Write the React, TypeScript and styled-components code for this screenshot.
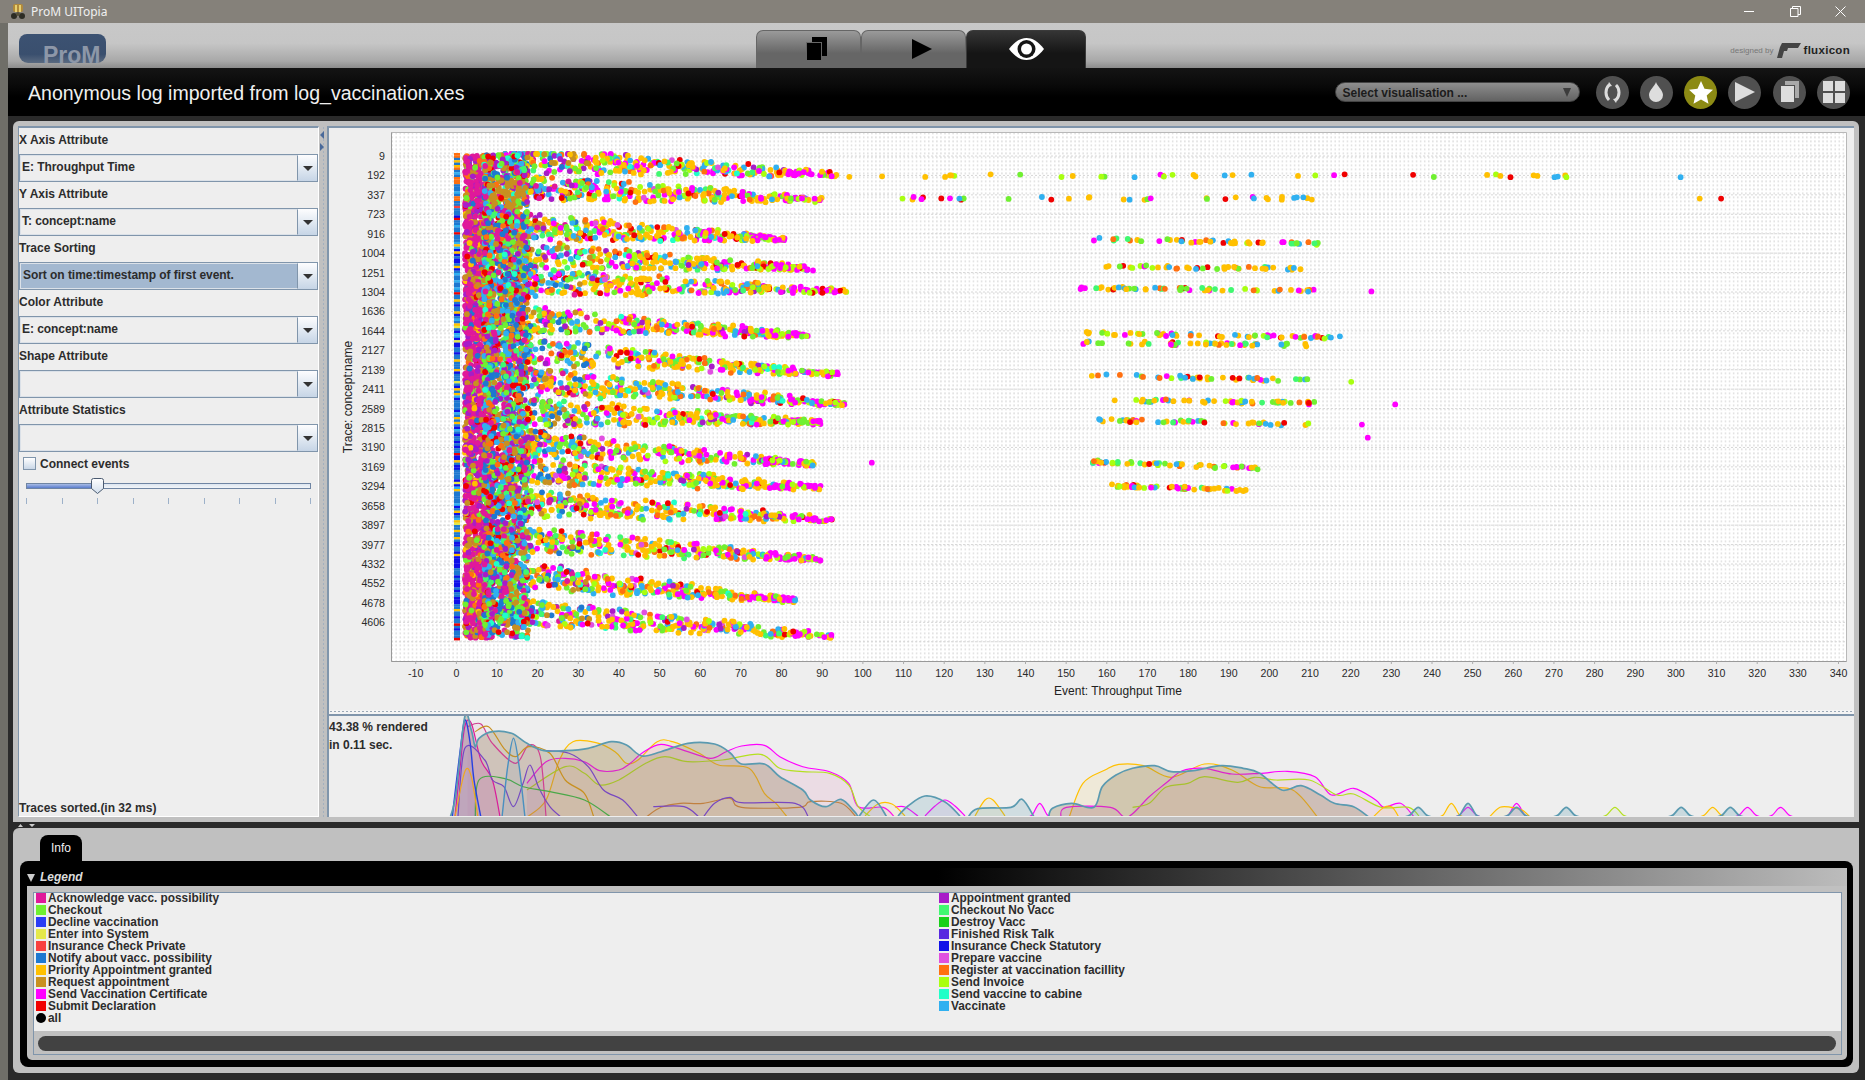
import React from "react";
import styled, { createGlobalStyle } from "styled-components";

const Global = createGlobalStyle`
  html, body { margin: 0; padding: 0; width: 1865px; height: 1080px; overflow: hidden; background: #2a2a2a; }
  #root { width: 1865px; height: 1080px; }
  * { box-sizing: border-box; }
`;

const SANS = `"Liberation Sans", Arial, sans-serif`;

/* ---------- frame ---------- */
const Desktop = styled.div`
  width: 1865px; height: 1080px; display: flex; flex-direction: column;
  font-family: ${SANS}; background: #6f6e68;
`;
const TitleBar = styled.div`
  height: 23px; flex: none; background: #85817a; display: flex; align-items: center;
  padding-left: 10px; color: #f0f0f0; font: 12px "Noto Sans", sans-serif; gap: 5px;
`;
const WindowButtons = styled.div`
  margin-left: auto; display: flex; align-items: center; margin-right: 19px; gap: 34.5px; height: 23px;
`;
const Frame = styled.div`
  flex: 1; margin-left: 8px; background: #2a2a2a; display: flex; flex-direction: column; min-height: 0;
`;
const Header = styled.div`
  height: 45px; flex: none; display: flex; align-items: flex-end; overflow: hidden;
  background: linear-gradient(#c8c8c8 0, #c6c6c6 45%, #a8a8a8 85%, #8c8c8c 100%);
`;
const Logo = styled.div`
  width: 87px; height: 29px; margin: 0 0 5px 11px; border-radius: 8px 8px 9px 9px; flex: none;
  background: linear-gradient(#3c5272, #3a4f6e 70%, #5a6a80); overflow: hidden;
  color: #8d97a8; font: bold 23px ${SANS}; padding: 9px 0 0 24px; line-height: 24px; white-space: nowrap;
`;
const Tabs = styled.div`
  display: flex; margin-left: 650px; align-self: flex-end; height: 38px;
`;
const Tab = styled.div<{ $active?: boolean }>`
  height: 38px; width: ${(p) => (p.$active ? 120 : 105)}px; display: flex; align-items: center; justify-content: center;
  border-radius: 7px 7px 0 0; padding: 0 0 2px ${(p) => (p.$active ? 0 : 16)}px;
  background: ${(p) => (p.$active ? "linear-gradient(#353535,#151515 60%)" : "linear-gradient(#9a9a9a,#666 60%)")};
  border: 1px solid ${(p) => (p.$active ? "#3a3a3a" : "#666")}; border-bottom: none;
`;
const Designed = styled.div`
  margin-left: auto; margin-right: 15px; margin-bottom: 10px; display: flex; align-items: center; gap: 3px;
  color: #777; font: 8px ${SANS};
`;
const Flux = styled.span`
  color: #222; font: bold 11.5px ${SANS}; letter-spacing: .3px;
`;
const Band = styled.div`
  height: 48px; flex: none; display: flex; align-items: center; padding: 0 15px 0 20px;
  background: linear-gradient(#141414, #0a0a0a 35%, #000 60%);
`;
const DocTitle = styled.div`
  color: #f0f0f0; font: 19.55px ${SANS}; padding-top: 2px;
`;
const VisSelect = styled.div`
  margin-left: auto; width: 245px; height: 20px; border-radius: 10px; padding: 1px 8px 0 7px;
  background: linear-gradient(#8e8e8e, #626262); display: flex; align-items: center; justify-content: space-between;
  color: #1c1c1c; font: bold 12px ${SANS}; margin-right: 16px; border: 1px solid #444;
`;
const VisArrow = styled.span`
  width: 0; height: 0; border-left: 4.5px solid transparent; border-right: 4.5px solid transparent;
  border-top: 9px solid #3c3c3c;
`;
const RoundRow = styled.div`
  display: flex; gap: 11.3px;
`;
const Round = styled.div<{ $on?: boolean }>`
  width: 33px; height: 33px; border-radius: 50%; background: ${(p) => (p.$on ? "#8c8a14" : "#505050")};
  display: flex; align-items: center; justify-content: center;
`;

/* ---------- main panel ---------- */
const Main = styled.div`
  height: 701px; flex: none; margin: 5px 6px 0 5px; background: #c0c0c0; border-radius: 6px 6px 0 0;
  padding: 5px 5px 5px 5px; display: flex;
`;
const Side = styled.div`
  width: 301px; flex: none; background: #eee; border-top: 2px solid #8095ab; border-left: 1px solid #8095ab;
  border-right: 1px solid #fff; border-bottom: 1px solid #fff; display: flex; flex-direction: column; color: #2c2c2c;
`;
const FieldLabel = styled.div`
  height: 26.2px; flex: none; padding-bottom: 7px; font: bold 12px ${SANS}; display: flex; align-items: flex-end;
`;
const Combo = styled.div`
  height: 27.8px; flex: none; display: flex; border: 1px solid #8095ab; background: #eee;
`;
const ComboValue = styled.div<{ $selected?: boolean }>`
  flex: 1; border: 1px solid #dbe1e8; border-right: 1px solid #8095ab; padding: 0 0 3px ${(p) => (p.$selected ? 2 : 1)}px;
  background: ${(p) => (p.$selected ? "#a3b8d0" : "#eee")}; font: bold 12px ${SANS}; letter-spacing: -.05px;
  display: flex; align-items: center; white-space: nowrap;
`;
const ComboBtn = styled.div`
  width: 19px; flex: none; background: linear-gradient(#fdfdfe, #c6d5e6);
  display: flex; align-items: center; justify-content: center;
`;
const ComboArrow = styled.span`
  width: 0; height: 0; border-left: 5px solid transparent; border-right: 5px solid transparent;
  border-top: 5px solid #333;
`;
const CheckRow = styled.div`
  display: flex; align-items: center; gap: 4px; margin: 5px 0 0 4px; height: 14px; font: bold 12px ${SANS};
`;
const CheckBox = styled.span`
  width: 13px; height: 13px; border: 1px solid #8095ab; background: linear-gradient(#fff, #c9d7e7);
`;
const SliderBox = styled.div`
  margin: 7px 7px 0 7px; position: relative; height: 16px; display: flex; align-items: center;
`;
const Track = styled.div`
  flex: 1; height: 6px; border: 1px solid #6f85a3; background: linear-gradient(#dce5f0, #f2f5f9);
`;
const TrackFill = styled.div`
  height: 100%; background: linear-gradient(#a8bce6, #5a7ccc);
`;
const Thumb = styled.svg`
  position: absolute; left: 64px; top: 0;
`;
const Ticks = styled.div`
  margin: 4px 7px 0 7px; display: flex; justify-content: space-between;
`;
const TickMark = styled.span`
  width: 1px; height: 6px; background: #9db1c9;
`;
const Status = styled.div`
  margin-top: auto; padding-bottom: 1px; font: bold 12px ${SANS};
`;
const VSplit = styled.div`
  width: 8px; flex: none; position: relative;
  background-image: radial-gradient(#a3b0bf .7px, transparent .9px);
  background-size: 3px 4px; background-position: 3px 0; background-repeat: repeat-y;
`;
const SplitArrows = styled.svg`
  position: absolute; left: 1px; top: 5px;
`;
const Right = styled.div`
  flex: 1; min-width: 0; background: #eee; border-top: 2px solid #8095ab; border-left: 2px solid #8095ab;
  display: flex; flex-direction: column;
`;
const ChartHost = styled.div`
  height: 582px; flex: none;
`;
const ChartSvg = styled.svg`
  display: block; width: 1525px; height: 582px;
`;
const TickText = styled.text`
  font: 10.6px ${SANS}; fill: #2a2a2a;
`;
const AxisTitle = styled.text`
  font: 12px ${SANS}; fill: #222;
`;
const HSplit = styled.div`
  height: 6px; flex: none; background-color: #f4f4f4; border-bottom: 2px solid #8095ab;
  background-image: radial-gradient(#9aa8b6 .7px, transparent .9px);
  background-size: 4px 3px; background-position: 0 0;
`;
const Trend = styled.div`
  height: 100px; flex: none; position: relative; overflow: hidden;
`;
const TrendSvg = styled.svg`
  display: block; width: 1525px; height: 100px;
`;
const Rendered = styled.div`
  position: absolute; left: 0; top: 2px; font: bold 12px/18px ${SANS}; color: #2c2c2c;
`;

/* ---------- splitter + bottom ---------- */
const DarkSplit = styled.div`
  height: 6px; flex: none; padding-left: 10px; display: flex; align-items: center;
`;
const Bottom = styled.div`
  height: 245px; flex: none; margin: 0 6px 0 5px; background: #c0c0c0; border-radius: 6px 0 6px 6px;
  padding: 7px 6px 6px 7px; display: flex; flex-direction: column;
`;
const InfoTab = styled.div`
  width: 42px; height: 26px; margin-left: 20px; flex: none; background: #000; color: #f0f0f0;
  border-radius: 8px 8px 0 0; font: 12px ${SANS}; display: flex; align-items: center; justify-content: center;
`;
const LegendBox = styled.div`
  flex: 1; background: #000; border-radius: 8px; padding: 7px 6px 7px 7px; display: flex; flex-direction: column; min-height: 0;
`;
const LegendHead = styled.div`
  height: 18px; flex: none; display: flex; align-items: center; gap: 5px; color: #ddd;
  font: italic bold 12px ${SANS};
  background: linear-gradient(90deg, #000 50%, #bcbcbc 100%);
`;
const HeadArrow = styled.span`
  width: 0; height: 0; border-left: 4px solid transparent; border-right: 4px solid transparent;
  border-top: 8px solid #ccc; margin-top: 1px;
`;
const LegendBody = styled.div`
  flex: 1; min-height: 0; background: #c0c0c0; border-radius: 0 0 5px 5px; padding: 6px 5px 5px 6px; display: flex;
`;
const LegendInner = styled.div`
  flex: 1; border: 1px solid #8095ab; background: #eee; display: flex; flex-direction: column; min-width: 0;
`;
const LegendCols = styled.div`
  flex: 1; display: grid; grid-template-columns: 903px 1fr; padding: 0 0 0 2px; margin-top: -1px; align-content: start;
`;
const LegendCol = styled.div`
  display: flex; flex-direction: column;
`;
const LegendRow = styled.div`
  height: 12px; display: flex; align-items: center; gap: 2px; font: bold 11.85px ${SANS}; color: #2c2c2c; white-space: nowrap;
`;
const Swatch = styled.span<{ $c: string; $round?: boolean }>`
  width: 10px; height: 10px; flex: none; background: ${(p) => p.$c}; border-radius: ${(p) => (p.$round ? "50%" : 0)};
`;
const ScrollTrack = styled.div`
  height: 23px; flex: none; background: #c0c0c0; padding: 5px 5px 3px 4px; display: flex;
`;
const ScrollThumb = styled.div`
  flex: 1; background: #424242; border-radius: 8px;
`;

/* ---------- data ---------- */
const C = {
  ack: "#e0199a", appt: "#a81cc8", check: "#70f030", noVacc: "#40f870", decl: "#2a3cf5", destroy: "#18d018",
  enter: "#e4e84a", risk: "#5828e0", ins: "#f84040", stat: "#1010e8", notify: "#1e78d0", prep: "#e050e0",
  prio: "#ffc000", reg: "#ff7010", req: "#c89020", inv: "#a8ff10", cert: "#ff00ff", cab: "#20ffc8", sub: "#f00000", vacc: "#30b0f0",
};
const leftLegend: [string, string][] = [
  ["Acknowledge vacc. possibility", C.ack], ["Checkout", C.check], ["Decline vaccination", C.decl], ["Enter into System", C.enter],
  ["Insurance Check Private", C.ins], ["Notify about vacc. possibility", C.notify], ["Priority Appointment granted", C.prio],
  ["Request appointment", C.req], ["Send Vaccination Certificate", C.cert], ["Submit Declaration", C.sub],
];
const rightLegend: [string, string][] = [
  ["Appointment granted", C.appt], ["Checkout No Vacc", C.noVacc], ["Destroy Vacc", C.destroy], ["Finished Risk Talk", C.risk],
  ["Insurance Check Statutory", C.stat], ["Prepare vaccine", C.prep], ["Register at vaccination facillity", C.reg],
  ["Send Invoice", C.inv], ["Send vaccine to cabine", C.cab], ["Vaccinate", C.vacc],
];
const fields: { label: string; value: string; selected?: boolean }[] = [
  { label: "X Axis Attribute", value: "E: Throughput Time" },
  { label: "Y Axis Attribute", value: "T: concept:name" },
  { label: "Trace Sorting", value: "Sort on time:timestamp of first event.", selected: true },
  { label: "Color Attribute", value: "E: concept:name" },
  { label: "Shape Attribute", value: "" },
  { label: "Attribute Statistics", value: "" },
];
const yTicks = [9,192,337,723,916,1004,1251,1304,1636,1644,2127,2139,2411,2589,2815,3190,3169,3294,3658,3897,3977,4332,4552,4678,4606];
const xTicks = Array.from({ length: 36 }, (_, i) => -10 + i * 10);
const X0 = 456.4, PX = 4.065;
const yAt = (i: number) => 156 + i * 19.43;

function mulberry(a: number) {
  return () => {
    a |= 0; a = (a + 0x6d2b79f5) | 0;
    let t = Math.imul(a ^ (a >>> 15), 1 | a);
    t = (t + Math.imul(t ^ (t >>> 7), 61 | t)) ^ t;
    return ((t ^ (t >>> 14)) >>> 0) / 4294967296;
  };
}
type Dot = { x: number; y: number; c: string };
const S = 1.1894;
const bands: [number, number, number][] = [
  [131,147,705],[155,168,695],[188,201,660],[212,226,685],[235,245,712],[265,282,680],[290,315,705],[316,340,710],
  [345,355,690],[370,390,685],[393,410,690],[420,437,700],[450,470,690],[480,505,670],[510,535,700],
];
const farRows: [number, number, number, number][] = [
  [201,205,915,1110],[224,226,930,1100],[242,244,908,1105],[280,284,912,1130],[288,290,910,1100],[315,320,916,1100],
  [336,339,918,1105],[353,357,915,1105],[388,394,918,1060],[408,412,926,1048],
];
function pick(r: () => number, list: [string, number][]) {
  const total = list.reduce((s, e) => s + e[1], 0);
  let v = r() * total;
  for (const [c, w] of list) { v -= w; if (v <= 0) return c; }
  return list[0][0];
}
const leftMix: [string, number][] = [[C.ack,50],[C.appt,16],[C.req,16],[C.reg,5],[C.check,4],[C.notify,4],[C.prio,4],[C.sub,1]];
const midMix: [string, number][] = [[C.check,14],[C.notify,14],[C.vacc,14],[C.req,16],[C.appt,11],[C.ack,11],[C.sub,7],[C.noVacc,4],[C.cab,3],[C.reg,6]];
const rightMix: [string, number][] = [[C.prio,36],[C.cert,15],[C.check,13],[C.vacc,10],[C.reg,6],[C.sub,3],[C.inv,6],[C.noVacc,4],[C.appt,3],[C.prep,2],[C.cab,2]];
const tailMix: [string, number][] = [[C.cert,46],[C.inv,16],[C.prio,20],[C.check,10],[C.vacc,4],[C.sub,4]];

function makeDots(): Dot[] {
  const r = mulberry(77);
  const out: Dot[] = [];
  for (const [a, b, e] of bands) {
    const y0 = a * S, y1 = b * S, xe = e * S;
    for (let i = 0; i < 340; i++) {
      const u = Math.pow(r(), 1.35);
      const x = 505 + (xe - 505) * u;
      const t = (x - 464) / (xe - 464);
      const y = y0 + (y1 - y0) * t + (r() - 0.5) * 30 * Math.pow(1 - t, 0.8) + (r() - 0.5) * 4;
      const c = u > 0.84 ? pick(r, tailMix) : x < 590 ? pick(r, midMix.concat(rightMix)) : pick(r, rightMix);
      out.push({ x, y: Math.max(154, y), c });
    }
  }
  for (const [a, b, s, e] of farRows) {
    const n = 42 + Math.floor(r() * 20);
    const segStart = s * S, segEnd = e * S;
    for (let i = 0; i < n; i++) {
      const x = segStart + (segEnd - segStart) * r();
      const t = (x - segStart) / (segEnd - segStart);
      out.push({ x, y: a * S + (b - a) * S * t + (r() - 0.5) * 3, c: pick(r, [[C.prio,35],[C.check,14],[C.vacc,12],[C.cert,12],[C.reg,8],[C.sub,6],[C.noVacc,8],[C.inv,5]]) });
    }
  }
  for (let i = 0; i < 36; i++) {
    const x = (710 + r() * 610) * S;
    out.push({ x, y: (146.5 + r() * 2.5) * S, c: pick(r, [[C.prio,40],[C.check,15],[C.vacc,15],[C.sub,10],[C.cert,10],[C.inv,10]]) });
  }
  for (let i = 0; i < 36; i++) {
    const x = (750 + r() * 370) * S;
    out.push({ x, y: (165.5 + r() * 2.5) * S, c: pick(r, [[C.prio,40],[C.check,15],[C.vacc,15],[C.sub,10],[C.cert,10],[C.inv,10]]) });
  }
  for (const [x, y, c] of [[1413,149,C.vacc],[1429,167,C.prio],[1447,167,C.sub],[1307,149,C.vacc],[1270,149,C.sub],[1317,149,C.inv],[733,389,C.cert],[1173,340,C.cert],[1153,245,C.cert],[1145,357,C.cert],[1150,368,C.cert],[1136,321,C.inv]] as [number,number,string][]) {
    out.push({ x: x * S, y: y * S, c });
  }
  // dense left block
  for (let i = 0; i < 2400; i++) {
    const x = 465 + Math.pow(r(), 1.1) * 28;
    const y = 155 + r() * 483;
    out.push({ x, y, c: pick(r, leftMix) });
  }
  // dense mid region, over the left block
  for (let i = 0; i < 2300; i++) {
    const x = 484 + Math.pow(r(), 1.2) * 44;
    const y = 155 + r() * 483;
    let c = pick(r, midMix);
    if (y > 180 && y < 210 && x > 490 && x < 520 && r() < 0.65) c = C.req;
    out.push({ x, y, c });
  }
  return out;
}
const dots = makeDots();
function makeStrip() {
  const r = mulberry(5);
  const out: { y: number; c: string }[] = [];
  for (let y = 153; y < 638; y += 2.4) {
    const top = y < 215;
    out.push({ y, c: pick(r, top
      ? [[C.notify,50],[C.prio,16],[C.reg,12],[C.ins,8],[C.vacc,14]]
      : [[C.notify,42],[C.stat,30],[C.prio,10],[C.vacc,12],[C.enter,4],[C.sub,2]]) });
  }
  return out;
}
const strip = makeStrip();

type P = [number, number];
const z5 = (pts: P[]): P[] => pts.map(([x, y]) => [x / 2.61 + 320, y / 3 + 620]);
const z9 = (pts: P[]): P[] => pts.map(([x, y]) => [x / 1.81 + 1000, y / 3 + 700]);
function smooth(p: P[]) {
  let d = `M${p[0][0].toFixed(1)} ${p[0][1].toFixed(1)}`;
  for (let i = 0; i < p.length - 1; i++) {
    const a = p[Math.max(0, i - 1)], b = p[i], c = p[i + 1], e = p[Math.min(p.length - 1, i + 2)];
    const c1x = b[0] + (c[0] - a[0]) / 6, c1y = b[1] + (c[1] - a[1]) / 6;
    const c2x = c[0] - (e[0] - b[0]) / 6, c2y = c[1] - (e[1] - b[1]) / 6;
    d += `C${c1x.toFixed(1)} ${c1y.toFixed(1)} ${c2x.toFixed(1)} ${c2y.toFixed(1)} ${c[0].toFixed(1)} ${c[1].toFixed(1)}`;
  }
  return d;
}
const bump = (cx: number, top: number, w = 27): P[] => [[cx - w, 352], [cx - w * 0.55, 345], [cx, top], [cx + w * 0.55, 345], [cx + w, 352]];
type Curve = { c: string; w?: number; f?: number; pts: P[] };
const ENV = "#5a9ab0";
const mainEnv: P[] = z5([[340,592],[355,520],[378,290],[395,330],[405,380],[415,355],[450,335],[500,340],[540,370],[585,392],[640,392],[700,385],[760,365],[800,375],[840,408],[890,395],[960,370],[1030,372],[1070,398],[1100,432],[1160,432],[1200,470],[1260,510],[1280,540],[1320,560],[1360,538],[1395,575],[1405,592]]);
const secondEnv: P[] = z9([[88,352],[95,325],[130,310],[170,322],[185,260],[210,225],[240,205],[280,197],[310,215],[350,212],[400,197],[440,205],[470,220],[510,270],[545,257],[580,285],[605,310],[640,320],[668,352]]);
const curves: Curve[] = [
  { c: "#ffc000", f: 0.09, pts: z5([[540,592],[590,540],[625,420],[660,365],[720,368],[770,395],[800,430],[830,420],[880,365],[920,365],[990,400],[1040,435],[1120,445],[1160,520],[1190,550],[1220,592]]) },
  { c: "#ffc000", f: 0.09, pts: z9([[125,352],[150,250],[190,210],[215,193],[260,197],[310,232],[370,192],[420,210],[470,260],[530,270],[575,352]]) },
  { c: "#ff00ff", f: 0.07, pts: z5([[540,490],[590,425],[640,415],[690,425],[730,452],[780,450],[810,430],[840,400],[890,373],[960,395],[1020,415],[1060,395],[1100,378],[1160,376],[1200,410],[1260,440],[1330,455],[1380,490],[1405,560],[1470,562],[1500,592]]) },
  { c: "#ff00ff", pts: [[895,807],[905,807],[918,816]] },
  { c: "#ff00ff", f: 0.05, pts: [[925,816],[935,806],[945,800],[955,806],[965,816]] },
  { c: "#ffc000", f: 0.07, pts: [[865,816],[878,804],[892,804],[905,816]] },
  { c: "#ffc000", f: 0.07, pts: [[975,816],[985,800],[993,800],[1005,816]] },
  { c: "#ff00ff", f: 0.07, pts: z9([[110,352],[120,322],[200,322],[230,352],[270,290],[300,250],[330,212],[370,205],[420,222],[470,220],[520,214],[570,230],[600,285],[640,265],[680,300],[695,322],[725,310],[750,352]]) },
  { c: "#b4e020", f: 0.05, pts: z5([[540,510],[640,440],[690,460],[730,495],[780,480],[850,430],[900,410],[960,425],[1050,420],[1150,403],[1200,445],[1260,455],[1330,460],[1380,495],[1405,560],[1440,592]]) },
  { c: "#b4e020", f: 0.05, pts: z9([[240,322],[270,310],[300,262],[340,250],[370,230],[430,247],[460,232],[500,240],[560,240],[610,285],[640,282],[690,322],[740,322],[760,352]]) },
  { c: "#b4e020", f: 0.05, pts: z9(bump(1113, 322)) },
  { c: "#ff00ff", f: 0.07, pts: z9(bump(935, 310)) },
  { c: "#ff00ff", f: 0.07, pts: z9(bump(847, 322)) },
  { c: "#ff00ff", f: 0.07, pts: z9(bump(1353, 322)) },
  { c: "#ff00ff", f: 0.07, pts: z9(bump(1413, 322)) },
  { c: "#ff00ff", f: 0.07, pts: z9(bump(72, 310, 25)) },
  { c: "#ffc000", f: 0.07, pts: z9(bump(817, 310)) },
  { c: "#ffc000", f: 0.07, pts: z9([[885,352],[905,322],[925,322],[945,330],[960,352]]) },
  { c: "#ffc000", f: 0.07, pts: z9(bump(1290, 322)) },
  { c: "#ffc000", f: 0.07, pts: z9([[675,352],[695,322],[710,322],[722,352]]) },
  { c: "#8a7a50", w: 0.01, f: 0.3, pts: mainEnv },
  { c: "#e0199a", f: 0.12, pts: z5([[352,592],[365,450],[378,320],[395,310],[420,420],[450,480],[470,592]]) },
  { c: "#d04090", f: 0.06, pts: z5([[385,320],[420,312],[450,370],[510,430],[545,375],[575,410],[590,592]]) },
  { c: "#c89020", pts: z5([[405,335],[440,320],[480,385],[510,410],[545,380],[600,400],[640,480],[690,520],[715,592]]) },
  { c: "#c08040", pts: z5([[850,592],[890,562],[940,550],[1000,550],[1070,535],[1100,562],[1250,562],[1280,545],[1360,550],[1400,592]]) },
  { c: "#7848c0", f: 0.05, pts: z5([[360,592],[378,385],[430,420],[450,480],[480,500],[505,560],[530,490],[548,435],[570,500],[600,560],[630,592]]) },
  { c: "#7848c0", pts: z5([[590,392],[650,400],[700,440],[740,510],[790,540],[830,592]]) },
  { c: "#7848c0", pts: z5([[870,560],[950,560],[990,592]]) },
  { c: "#7848c0", pts: z5([[1000,592],[1030,550],[1070,532],[1100,548],[1240,550],[1275,592]]) },
  { c: "#4aa848", pts: z5([[405,592],[415,480],[480,475],[530,500],[600,515],[690,540],[760,592]]) },
  { c: "#ffb010", pts: z5([[352,592],[378,455],[395,470],[412,592]]) },
  { c: "#2840e0", w: 1.4, f: 0.08, pts: z5([[345,592],[365,400],[378,300],[392,370],[402,480],[420,592]]) },
  { c: "#4a90c0", w: 1.4, f: 0.08, pts: z5([[475,592],[490,440],[505,355],[520,440],[535,592]]) },
  { c: ENV, w: 1.7, pts: mainEnv },
  { c: ENV, w: 1.7, f: 0.2, pts: z5([[1405,592],[1445,540],[1480,592]]) },
  { c: ENV, w: 1.7, f: 0.2, pts: [[898,816],[908,806],[925,796],[945,802],[960,816]] },
  { c: ENV, w: 1.7, f: 0.2, pts: z9([[-58,352],[-40,326],[20,322],[40,298],[62,352]]) },
  { c: "#8a7a50", w: 0.01, f: 0.3, pts: secondEnv },
  { c: ENV, w: 1.7, pts: secondEnv },
  ...[757, 847, 935, 1025, 1233, 1322].map((cx, i): Curve => ({ c: ENV, w: 1.7, f: 0.25, pts: z9(bump(cx, i === 1 ? 310 : 322)) })),
];
const ticksRow = Array.from({ length: 9 }, (_, i) => i);

const App = () => (
  <Desktop>
    <Global />
    <TitleBar>
      <svg width="16" height="18" viewBox="0 0 16 18" aria-hidden>
        <rect x="3" y="1" width="10" height="8" rx="2" fill="#b08a3c" />
        <rect x="5" y="2" width="2" height="7" fill="#e8d070" />
        <rect x="9" y="2" width="2" height="7" fill="#e8d070" />
        <circle cx="4" cy="13" r="3" fill="#2c2c24" />
        <circle cx="12" cy="13" r="3" fill="#2c2c24" />
        <circle cx="8" cy="11" r="2" fill="#55503a" />
      </svg>
      ProM UITopia
      <WindowButtons>
        <svg width="11" height="11" viewBox="0 0 11 11" aria-hidden><path d="M0 5.5h10" stroke="#fff" fill="none" /></svg>
        <svg width="11" height="11" viewBox="0 0 11 11" aria-hidden><path d="M.5 2.5h7.5v8H.5zM2.5 2.5V.5h8v8H8" stroke="#fff" fill="none" /></svg>
        <svg width="11" height="11" viewBox="0 0 11 11" aria-hidden><path d="M.5.5l10 10M10.5.5l-10 10" stroke="#fff" fill="none" /></svg>
      </WindowButtons>
    </TitleBar>
    <Frame>
      <Header>
        <Logo>ProM</Logo>
        <Tabs>
          <Tab>
            <svg width="21" height="24" viewBox="0 0 21 24" aria-hidden>
              <rect x="6" y="0" width="15" height="19" fill="#000" />
              <rect x="0.5" y="5.5" width="15" height="18" fill="#000" stroke="#666" />
            </svg>
          </Tab>
          <Tab>
            <svg width="20" height="20" viewBox="0 0 20 20" aria-hidden><path d="M0 0l20 10L0 20z" fill="#000" /></svg>
          </Tab>
          <Tab $active>
            <svg width="35" height="22" viewBox="0 0 35 22" aria-hidden>
              <path d="M0 11C6 3 12 0 17.5 0S29 3 35 11c-6 8-12 11-17.5 11S6 19 0 11z" fill="#fff" />
              <circle cx="17.5" cy="11" r="9" fill="#151515" />
              <circle cx="17.5" cy="11" r="5.5" fill="#fff" />
            </svg>
          </Tab>
        </Tabs>
        <Designed>
          designed by
          <svg width="24" height="16" viewBox="0 0 24 16" aria-hidden>
            <path d="M5 1h19l-3 5H11l-1 3H7l-2 7H0L3 5z" fill="#444" />
          </svg>
          <Flux>fluxicon</Flux>
        </Designed>
      </Header>
      <Band>
        <DocTitle>Anonymous log imported from log_vaccination.xes</DocTitle>
        <VisSelect>Select visualisation ...<VisArrow /></VisSelect>
        <RoundRow>
          <Round>
            <svg width="19" height="21" viewBox="0 0 19 21" aria-hidden fill="none" stroke="#ddd" strokeWidth="3">
              <path d="M6 3C2 7 2 14 6 18" />
              <path d="M13 3c4 4 4 11 0 15" />
              <path d="M6 0l3 4-5 1zM13 21l-3-4 5-1z" fill="#ddd" stroke="none" />
            </svg>
          </Round>
          <Round>
            <svg width="14" height="20" viewBox="0 0 14 20" aria-hidden><path d="M7 0c1 4 7 8 7 13a7 7 0 0 1-14 0C0 8 6 4 7 0z" fill="#ddd" /></svg>
          </Round>
          <Round $on>
            <svg width="24" height="23" viewBox="0 0 24 23" aria-hidden><path d="M12 0l3.5 7.8 8.5.9-6.3 5.7 1.8 8.4L12 18.5 4.5 22.8l1.8-8.4L0 8.7l8.5-.9z" fill="#fff" /></svg>
          </Round>
          <Round>
            <svg width="21" height="20" viewBox="0 0 21 20" aria-hidden><path d="M1 0l20 10L1 20z" fill="#ddd" /></svg>
          </Round>
          <Round>
            <svg width="19" height="22" viewBox="0 0 19 22" aria-hidden>
              <rect x="5" y="0" width="14" height="17" fill="#aaa" />
              <rect x="0.5" y="4.5" width="14" height="17" fill="#ddd" stroke="#505050" />
            </svg>
          </Round>
          <Round>
            <svg width="22" height="22" viewBox="0 0 22 22" aria-hidden fill="#ddd">
              <rect width="10" height="10" /><rect x="12" width="10" height="10" />
              <rect y="12" width="10" height="10" /><rect x="12" y="12" width="10" height="10" />
            </svg>
          </Round>
        </RoundRow>
      </Band>
      <Main>
        <Side>
          {fields.map((f) => (
            <React.Fragment key={f.label}>
              <FieldLabel>{f.label}</FieldLabel>
              <Combo>
                <ComboValue $selected={f.selected}>{f.value}</ComboValue>
                <ComboBtn><ComboArrow /></ComboBtn>
              </Combo>
            </React.Fragment>
          ))}
          <CheckRow><CheckBox />Connect events</CheckRow>
          <SliderBox>
            <Track><TrackFill style={{ width: "25%" }} /></Track>
            <Thumb width="15" height="16" viewBox="0 0 15 16" aria-hidden>
              <path d="M1.5 2.5q0-2 2-2h8q2 0 2 2v8l-6 5-6-5z" fill="url(#th)" stroke="#4a5a70" />
              <defs><linearGradient id="th" x1="0" y1="0" x2="0" y2="1"><stop offset="0" stopColor="#fff" /><stop offset="1" stopColor="#d2deec" /></linearGradient></defs>
            </Thumb>
          </SliderBox>
          <Ticks>{ticksRow.map((i) => <TickMark key={i} />)}</Ticks>
          <Status>Traces sorted.(in 32 ms)</Status>
        </Side>
        <VSplit>
          <SplitArrows width="4" height="20" viewBox="0 0 4 20" aria-hidden>
            <path d="M4 0v8L0 4zM0 12l4 4-4 4z" fill="#4a6a9a" />
          </SplitArrows>
        </VSplit>
        <Right>
          <ChartHost>
            <ChartSvg viewBox="329 128 1525 582">
              <defs>
                <pattern id="grid" x={X0} y="132.5" width={PX} height="4" patternUnits="userSpaceOnUse">
                  <rect x="0" y="0" width="1.6" height="1.6" fill="#dcdcdc" />
                </pattern>
              </defs>
              <rect x="391" y="132" width="1455" height="529" fill="#fff" />
              <rect x="391" y="132" width="1455" height="529" fill="url(#grid)" />
              {yTicks.map((_, i) => (
                <line key={i} x1="391" x2="1846" y1={yAt(i)} y2={yAt(i)} stroke="#d6d6d6" strokeDasharray="2 2" />
              ))}
              <line x1="391" x2="1846" y1={yAt(25)} y2={yAt(25)} stroke="#d6d6d6" strokeDasharray="2 2" />
              <path d="M391.5 132.5H1846.5V661.5H391.5Z" fill="none" stroke="#b8b8b8" />
              <path d="M391.5 132.5V661.5H1846.5" fill="none" stroke="#999" />
              {yTicks.map((t, i) => (
                <TickText key={t} x="385" y={yAt(i) + 4} textAnchor="end">{t}</TickText>
              ))}
              {xTicks.map((t) => (
                <g key={t}>
                  <line x1={X0 + t * PX} x2={X0 + t * PX} y1="661" y2="664" stroke="#aaa" />
                  <TickText x={X0 + t * PX} y="677" textAnchor="middle">{t}</TickText>
                </g>
              ))}
              <AxisTitle x="1118" y="695" textAnchor="middle">Event: Throughput Time</AxisTitle>
              <AxisTitle x="352" y="397" textAnchor="middle" transform="rotate(-90 352 397)">Trace: concept:name</AxisTitle>
              {strip.map((s, i) => <rect key={i} x="454" y={s.y} width="6" height="2.6" fill={s.c} />)}
              {dots.map((d, i) => <circle key={i} cx={d.x.toFixed(1)} cy={d.y.toFixed(1)} r="2.9" fill={d.c} />)}
            </ChartSvg>
          </ChartHost>
          <HSplit />
          <Trend>
            <TrendSvg viewBox="329 716 1525 100">
              {curves.map((c, i) => {
                const d = smooth(c.pts);
                const first = c.pts[0], last = c.pts[c.pts.length - 1];
                return (
                  <g key={i}>
                    {c.f ? <path d={`${d}L${last[0].toFixed(1)} 820L${first[0].toFixed(1)} 820Z`} fill={c.c} fillOpacity={c.f} /> : null}
                    <path d={d} fill="none" stroke={c.c} strokeWidth={c.w ?? 1.2} />
                  </g>
                );
              })}
            </TrendSvg>
            <Rendered>43.38 % rendered<br />in 0.11 sec.</Rendered>
          </Trend>
        </Right>
      </Main>
      <DarkSplit>
        <svg width="18" height="5" viewBox="0 0 18 5" aria-hidden><path d="M0 4l2.5-3L5 4zM11 1h6l-3 3z" fill="#ccc" /></svg>
      </DarkSplit>
      <Bottom>
        <InfoTab>Info</InfoTab>
        <LegendBox>
          <LegendHead><HeadArrow />Legend</LegendHead>
          <LegendBody>
            <LegendInner>
              <LegendCols>
                <LegendCol>
                  {leftLegend.map(([t, c]) => <LegendRow key={t}><Swatch $c={c} />{t}</LegendRow>)}
                  <LegendRow><Swatch $c="#000" $round />all</LegendRow>
                </LegendCol>
                <LegendCol>
                  {rightLegend.map(([t, c]) => <LegendRow key={t}><Swatch $c={c} />{t}</LegendRow>)}
                </LegendCol>
              </LegendCols>
              <ScrollTrack><ScrollThumb /></ScrollTrack>
            </LegendInner>
          </LegendBody>
        </LegendBox>
      </Bottom>
    </Frame>
  </Desktop>
);

export default App;
